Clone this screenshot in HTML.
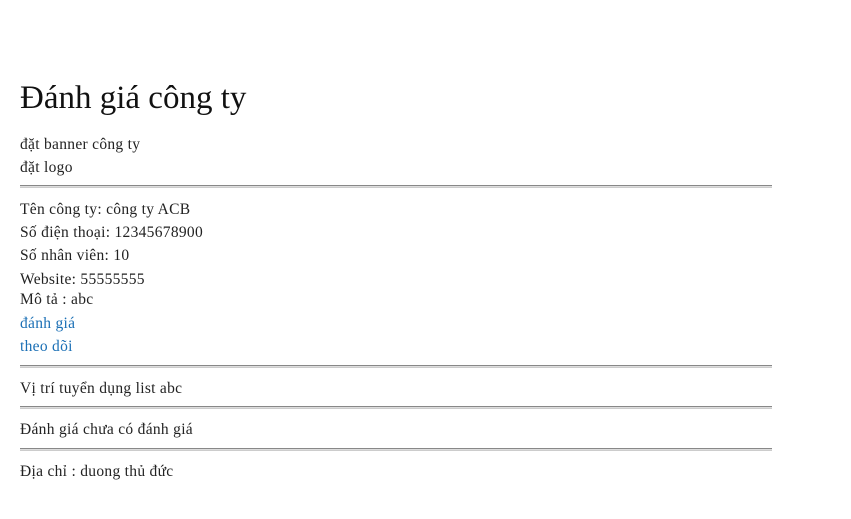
<!DOCTYPE html><html><head><meta charset="utf-8"><style>
body{margin:0;width:851px;height:519px;background:#fff;font-family:"Liberation Serif","DejaVu Serif",serif;color:#222;}
div{position:absolute;left:20px;font-size:15.5px;letter-spacing:0.3px;line-height:20px;white-space:nowrap}
.h{font-size:33px;letter-spacing:0;line-height:40px;color:#111}
.a{color:#1a6fb5}
.hr{left:20px;width:752px;height:1px;border-top:1px solid #888;border-bottom:1px solid #ccc;background:#ddd;}
</style></head><body>
<div class="h" style="top:78px">Đánh giá công ty</div>
<div style="top:135px">đặt banner công ty</div>
<div style="top:158px">đặt logo</div>
<div class="hr" style="top:185px"></div>
<div style="top:200px">Tên công ty: công ty ACB</div>
<div style="top:223px">Số điện thoại: 12345678900</div>
<div style="top:246px">Số nhân viên: 10</div>
<div style="top:270px">Website: 55555555</div>
<div style="top:290px">Mô tả : abc</div>
<div class="a" style="top:314px">đánh giá</div>
<div class="a" style="top:337px">theo dõi</div>
<div class="hr" style="top:365px"></div>
<div style="top:379px">Vị trí tuyển dụng list abc</div>
<div class="hr" style="top:406px"></div>
<div style="top:420px">Đánh giá chưa có đánh giá</div>
<div class="hr" style="top:448px"></div>
<div style="top:462px">Địa chỉ : duong thủ đức</div>
</body></html>
